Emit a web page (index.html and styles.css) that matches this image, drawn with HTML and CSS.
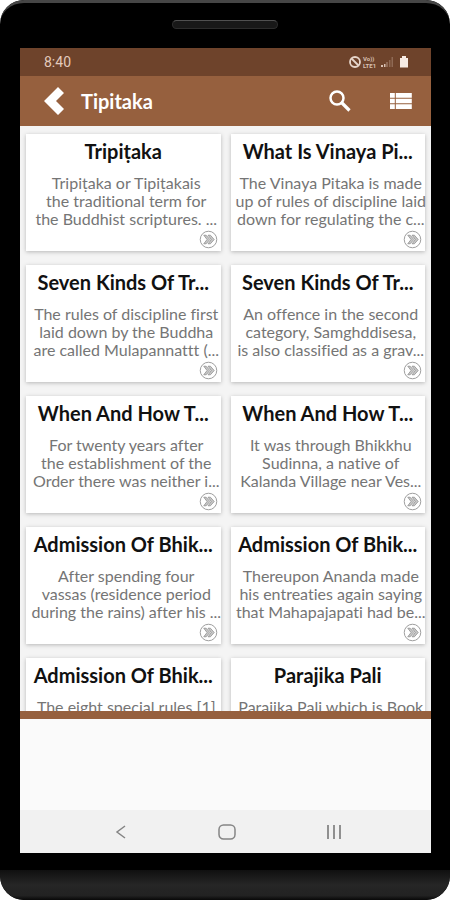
FILE: index.html
```
<!DOCTYPE html>
<html lang="en">
<head>
    <meta charset="UTF-8">
    <meta name="viewport" content="width=device-width, initial-scale=1.0">
    <title>Tipitaka</title>
    <link rel="stylesheet" href="styles.css">
</head>
<body>

    <!-- shared icon for the card buttons -->
    <svg class="sprite" aria-hidden="true">
        <symbol id="more" viewBox="0 0 20 20">
            <circle cx="10" cy="10" r="8.7" fill="none" stroke="#999" stroke-width="1"/>
            <path d="M5 5.500h2.500l4 4.500-4 4.500H5L8.500 10zM9.500 5.500H12l4 4.500-4 4.500H9.500L13 10z" fill="#c8c8c8" stroke="#8c8c8c" stroke-width=".8"/>
        </symbol>
    </svg>

    <div class="phone">
        <div class="top-bezel"><div class="speaker"></div></div>

        <div class="screen">
            <div class="status-bar">
                <span class="time">8:40</span>
                <svg width="60" height="14" viewBox="0 0 60 14" aria-hidden="true">
                    <g fill="none" stroke="#e6d5ca" stroke-width="1.8">
                        <circle cx="6" cy="7" r="5"/>
                        <path d="M2.500 3.500l7 7"/>
                    </g>
                    <g class="volte">
                        <text x="14" y="6">Vo))</text>
                        <text x="14" y="13">LTE1</text>
                    </g>
                    <path d="M32 12h2v-2h-2zM35 12h1.500v-3H35z" fill="#d8c1b3"/>
                    <path d="M37 12h2V7h-2zM40 12h1.500V5H40zM42.500 12H44V2h-1.500z" fill="#8f6a55"/>
                    <path d="M51 3h2V1h4v2h2v9.500h-8z" fill="#f6ebe4"/>
                </svg>
            </div>

            <header class="toolbar">
                <button class="icon-btn" aria-label="Back">
                    <svg width="22" height="30" viewBox="0 0 22 30"><path d="M15 1l6 6-8 8 8 8-6 6L1 15z" fill="#fff"/></svg>
                </button>
                <h1>Tipitaka</h1>
                <button class="icon-btn search" aria-label="Search">
                    <svg width="24" height="24" viewBox="0 0 24 24"><circle cx="9" cy="9" r="6.500" fill="none" stroke="#fff" stroke-width="2.500"/><path d="M13.500 13.500l8 8" stroke="#fff" stroke-width="3.200"/></svg>
                </button>
                <button class="icon-btn" aria-label="List view">
                    <svg width="22" height="18" viewBox="0 0 22 18"><path d="M0 1h4.800v4.800H0zM5.800 1h16v4.800h-16zM0 6.700h4.800v4.600H0zM5.800 6.700h16v4.600h-16zM0 12.200h4.800V17H0zM5.800 12.200h16V17h-16z" fill="#fff"/></svg>
                </button>
            </header>

            <main class="cards">
                <article class="card">
                    <h2>Tripiṭaka</h2>
                    <p>Tripiṭaka or Tipiṭakais<br>the traditional term for<br>the Buddhist scriptures. ...</p>
                    <button class="more" aria-label="Read more"><svg><use href="#more"/></svg></button>
                </article>
                <article class="card">
                    <h2>What Is Vinaya Pi...</h2>
                    <p>The Vinaya Pitaka is made<br>up of rules of discipline laid<br>down for regulating the c...</p>
                    <button class="more" aria-label="Read more"><svg><use href="#more"/></svg></button>
                </article>
                <article class="card">
                    <h2>Seven Kinds Of Tr...</h2>
                    <p>The rules of discipline first<br>laid down by the Buddha<br>are called Mulapannattt (...</p>
                    <button class="more" aria-label="Read more"><svg><use href="#more"/></svg></button>
                </article>
                <article class="card">
                    <h2>Seven Kinds Of Tr...</h2>
                    <p>An offence in the second<br>category, Samghddisesa,<br>is also classified as a grav...</p>
                    <button class="more" aria-label="Read more"><svg><use href="#more"/></svg></button>
                </article>
                <article class="card">
                    <h2>When And How T...</h2>
                    <p>For twenty years after<br>the establishment of the<br>Order there was neither i...</p>
                    <button class="more" aria-label="Read more"><svg><use href="#more"/></svg></button>
                </article>
                <article class="card">
                    <h2>When And How T...</h2>
                    <p>It was through Bhikkhu<br>Sudinna, a native of<br>Kalanda Village near Ves...</p>
                    <button class="more" aria-label="Read more"><svg><use href="#more"/></svg></button>
                </article>
                <article class="card">
                    <h2>Admission Of Bhik...</h2>
                    <p>After spending four<br>vassas (residence period<br>during the rains) after his ...</p>
                    <button class="more" aria-label="Read more"><svg><use href="#more"/></svg></button>
                </article>
                <article class="card">
                    <h2>Admission Of Bhik...</h2>
                    <p>Thereupon Ananda made<br>his entreaties again saying<br>that Mahapajapati had be...</p>
                    <button class="more" aria-label="Read more"><svg><use href="#more"/></svg></button>
                </article>
                <article class="card">
                    <h2>Admission Of Bhik...</h2>
                    <p>The eight special rules [1]</p>
                </article>
                <article class="card">
                    <h2>Parajika Pali</h2>
                    <p>Parajika Pali which is Book</p>
                </article>
            </main>

            <div class="ad-space"></div>

            <nav class="nav-bar">
                <button class="icon-btn" aria-label="Back">
                    <svg width="18" height="18" viewBox="0 0 18 18"><path d="M13 3L5 9l8 6" fill="none" stroke="#858585" stroke-width="1.500"/></svg>
                </button>
                <button class="icon-btn" aria-label="Home">
                    <svg width="18" height="18" viewBox="0 0 18 18"><rect x="1" y="2" width="16" height="14" rx="4.500" fill="none" stroke="#858585" stroke-width="1.500"/></svg>
                </button>
                <button class="icon-btn" aria-label="Recent apps">
                    <svg width="18" height="18" viewBox="0 0 18 18"><path d="M3 2v14M9 2v14M15 2v14" stroke="#858585" stroke-width="1.800"/></svg>
                </button>
            </nav>
        </div>

        <div class="chin"></div>
    </div>

</body>
</html>
```
FILE: styles.css
```
* {
    box-sizing: border-box;
}
body {
    margin: 0;
    background: #fff;
    font-family: Lato, sans-serif;
    font-variant-ligatures: none;
}
button {
    padding: 0;
    border: 0;
    background: none;
    cursor: pointer;
}
svg {
    display: block;
}
.sprite {
    display: none;
}
.phone {
    display: flex;
    flex-direction: column;
    height: 100vh;
    overflow: hidden;
    background: #000;
    border-radius: 24px;
}
.top-bezel {
    flex: none;
    height: 48px;
    padding-top: 17px;
    border-top: 3px solid #464646;
    border-radius: 24px 24px 0 0;
}
.speaker {
    width: 106px;
    height: 9px;
    margin: 0 auto;
    border: 1px solid #2c2c2c;
    border-top-color: #505050;
    border-radius: 5px;
    background: #181818;
}
.screen {
    display: flex;
    flex-direction: column;
    flex: 1;
    min-height: 0;
    margin: 0 19px 0 20px;
    background: #fafafa;
}
.status-bar {
    display: flex;
    align-items: center;
    justify-content: space-between;
    flex: none;
    height: 28px;
    padding: 0 22px 0 24px;
    background: #6e432b;
}
.time {
    color: #e3cbbd;
    font-family: Roboto, sans-serif;
    font-size: 14px;
}
.volte {
    fill: #d8c1b3;
    font: bold 6px Roboto, sans-serif;
}
.toolbar {
    display: flex;
    align-items: center;
    flex: none;
    height: 50px;
    padding: 0 19px 0 23px;
    background: #96603e;
}
.toolbar h1 {
    margin: 0 0 0 16px;
    color: #fff;
    font-size: 20px;
    line-height: 24px;
}
.search {
    margin: 0 38px 0 auto;
}
.cards {
    display: grid;
    grid-template-columns: 1fr 1fr;
    align-content: start;
    gap: 14px 10px;
    flex: 1;
    min-height: 0;
    padding: 8px 6px 0;
    overflow: hidden;
    background: #f4f4f4;
}
.card {
    display: flex;
    flex-direction: column;
    align-items: center;
    height: 117px;
    min-width: 0;
    padding: 5px 0 2px;
    background: #fff;
    box-shadow: 0 1px 4px rgba(0, 0, 0, 0.25);
    text-align: center;
    white-space: nowrap;
}
.card h2 {
    margin: 0 0 11px;
    color: #111;
    font-size: 20px;
    line-height: 24px;
}
.card p {
    margin: 0;
    padding-left: 6px;
    color: #757575;
    font-size: 16px;
    line-height: 18px;
}
.more {
    align-self: flex-end;
    margin: auto 3px 0 0;
}
.more svg {
    width: 19px;
    height: 19px;
}
.ad-space {
    flex: none;
    height: 99px;
    border-top: 8px solid #96603e;
}
.nav-bar {
    display: flex;
    align-items: center;
    justify-content: space-evenly;
    flex: none;
    height: 43px;
    padding-left: 3px;
    background: #f1f1f1;
}
.chin {
    flex: none;
    height: 30px;
    margin-top: 17px;
    border-radius: 0 0 24px 24px;
    background: linear-gradient(#101010, #262626 50%, #222 85%, #080808);
}
```
